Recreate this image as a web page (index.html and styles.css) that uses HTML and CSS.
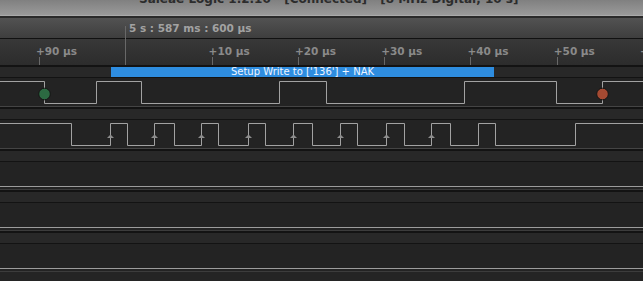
FILE: index.html
```html
<!DOCTYPE html>
<html lang="en">
<head>
  <meta charset="UTF-8">
  <meta name="viewport" content="width=device-width, initial-scale=1.0">
  <title>Saleae Logic</title>
  <link rel="stylesheet" href="styles.css">
</head>
<body>
  <div class="titlebar">
    <div class="title-text">Saleae Logic 1.2.10 - [Connected] - [8 MHz Digital, 10 s]</div>
  </div>

  <div class="timeline">
    <div class="timebar">5 s : 587 ms : 600 µs</div>
    <div class="ruler">
      <div class="cell"><span class="label">+90 µs</span><span class="tick"></span></div>
      <div class="cell"><span class="label"></span><span class="tick"></span></div>
      <div class="cell"><span class="label">+10 µs</span><span class="tick"></span></div>
      <div class="cell"><span class="label">+20 µs</span><span class="tick"></span></div>
      <div class="cell"><span class="label">+30 µs</span><span class="tick"></span></div>
      <div class="cell"><span class="label">+40 µs</span><span class="tick"></span></div>
      <div class="cell"><span class="label">+50 µs</span><span class="tick"></span></div>
      <div class="cell"><span class="label">+60 µs</span><span class="tick"></span></div>
    </div>
    <div class="marker"></div>
  </div>

  <!-- channel 0: SDA -->
  <div class="channel">
    <div class="strip">
      <div class="frame">Setup Write to ['136'] + NAK</div>
    </div>
    <div class="wave">
      <svg width="643" height="28" viewBox="0 0 643 28">
        <polyline class="sig" points="0,3.5 44.5,3.5 44.5,25.5 96.5,25.5 96.5,3.5 141.5,3.5 141.5,25.5 279.5,25.5 279.5,3.5 326.5,3.5 326.5,25.5 464.5,25.5 464.5,3.5 556.5,3.5 556.5,25.5 602.5,25.5 602.5,3.5 643,3.5"/>
        <circle class="start" cx="44.5" cy="16" r="5.8"/>
        <circle class="stop" cx="602.5" cy="16" r="5.8"/>
      </svg>
    </div>
  </div>

  <!-- channel 1: SCL -->
  <div class="channel">
    <div class="strip"></div>
    <div class="wave">
      <svg width="643" height="28" viewBox="0 0 643 28">
        <polyline class="sig" points="0,3.5 71.5,3.5 71.5,25.5 110.5,25.5 110.5,3.5 127.5,3.5 127.5,25.5 154.5,25.5 154.5,3.5 174.5,3.5 174.5,25.5 201.5,25.5 201.5,3.5 218.5,3.5 218.5,25.5 248.5,25.5 248.5,3.5 265.5,3.5 265.5,25.5 293.5,25.5 293.5,3.5 312.5,3.5 312.5,25.5 340.5,25.5 340.5,3.5 357.5,3.5 357.5,25.5 386.5,25.5 386.5,3.5 404.5,3.5 404.5,25.5 431.5,25.5 431.5,3.5 450.5,3.5 450.5,25.5 478.5,25.5 478.5,3.5 495.5,3.5 495.5,25.5 575.5,25.5 575.5,3.5 643,3.5"/>
        <polygon class="clk" points="107,18 110.5,14.5 114,18"/>
        <polygon class="clk" points="151,18 154.5,14.5 158,18"/>
        <polygon class="clk" points="198,18 201.5,14.5 205,18"/>
        <polygon class="clk" points="245,18 248.5,14.5 252,18"/>
        <polygon class="clk" points="290,18 293.5,14.5 297,18"/>
        <polygon class="clk" points="337,18 340.5,14.5 344,18"/>
        <polygon class="clk" points="383,18 386.5,14.5 390,18"/>
        <polygon class="clk" points="428,18 431.5,14.5 435,18"/>
      </svg>
    </div>
  </div>

  <div class="channel">
    <div class="strip"></div>
    <div class="wave idle"></div>
  </div>
  <div class="channel">
    <div class="strip"></div>
    <div class="wave idle"></div>
  </div>
  <div class="channel">
    <div class="strip"></div>
    <div class="wave idle"></div>
  </div>
</body>
</html>
```

FILE: styles.css
```css
body {
  margin: 0;
  background: #242424;
  font-family: "DejaVu Sans", Verdana, sans-serif;
  overflow: hidden;
}
.titlebar {
  height: 15px;
  background: linear-gradient(#808080, #9a9a9a);
  border-bottom: 1px solid #aaaaaa;
  overflow: hidden;
}
.title-text {
  margin-top: -7px;
  padding-left: 139px;
  font-size: 12px;
  line-height: 12px;
  font-weight: bold;
  color: #2c2c2c;
  white-space: nowrap;
}
.timeline {
  position: relative;
}
.timebar {
  height: 16px;
  padding-top: 4px;
  padding-left: 129px;
  border-top: 2px solid #2a2a2a;
  border-bottom: 1px solid #111;
  background: linear-gradient(#525252, #3e3e3e);
  color: #a2a2a2;
  font-size: 10.5px;
  line-height: 12px;
  font-weight: bold;
  white-space: nowrap;
}
.ruler {
  display: flex;
  height: 20px;
  padding: 6px 0 0 36px;
  background: linear-gradient(#383838, #2c2c2c);
  overflow: hidden;
}
.cell {
  flex: none;
  width: 86.3px;
  display: flex;
  flex-direction: column;
  justify-content: space-between;
}
.label {
  font-size: 10.5px;
  line-height: 12px;
  font-weight: bold;
  color: #8a8a8a;
  white-space: nowrap;
}
.tick {
  width: 1px;
  height: 8px;
  margin-left: 3px;
  background: #686868;
}
.marker {
  position: absolute;
  left: 125px;
  top: 10px;
  width: 1px;
  height: 39px;
  background: #686868;
}
.channel {
  border-top: 2px solid #131313;
}
.strip {
  height: 10px;
  background: #282828;
  border-bottom: 1px solid #131313;
}
.frame {
  width: 383px;
  height: 10px;
  margin-left: 111px;
  background: #2e8de0;
  color: #eef5ff;
  font-size: 10px;
  line-height: 10px;
  text-align: center;
  white-space: nowrap;
}
.wave {
  height: 28px;
  background: #232323;
  border-bottom: 1px solid #444;
}
.wave svg {
  display: block;
}
.wave.idle {
  box-sizing: border-box;
  border-bottom: 1px solid #3c3c3c;
  box-shadow: inset 0 -2px 0 #232323, inset 0 -3px 0 #9c9c9c;
}
.sig {
  fill: none;
  stroke: #a2a2a2;
  stroke-width: 1;
}
.start {
  fill: #2c6a42;
  stroke: #151515;
  stroke-width: 1;
}
.stop {
  fill: #a54a32;
  stroke: #151515;
  stroke-width: 1;
}
.clk {
  fill: #8c8c8c;
}
```
